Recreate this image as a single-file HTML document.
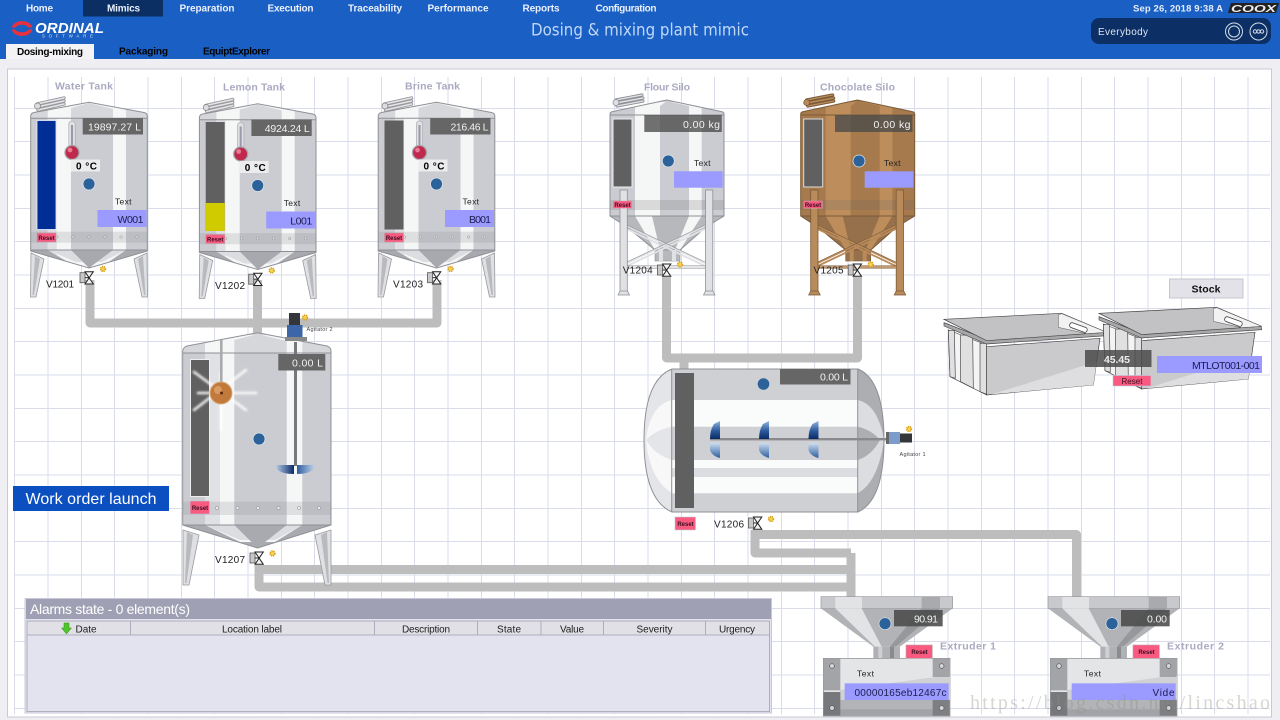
<!DOCTYPE html>
<html><head><meta charset="utf-8"><title>Dosing &amp; mixing plant mimic</title>
<style>
html,body{margin:0;padding:0;width:1280px;height:720px;overflow:hidden;background:#eeeef3}
svg{display:block;font-family:"Liberation Sans",sans-serif;filter:blur(.3px)}
.nav{font-size:10px;font-weight:bold;fill:#eaf0fb;text-anchor:middle}
.tab{font-size:10px;font-weight:bold;fill:#000}
.ttl{font-size:10.5px;font-weight:bold;fill:#a9a9c2}
.val{font-size:10.5px;fill:#f2f2f2;text-anchor:end}
.lbl{font-size:10px;fill:#222}
.sm{font-size:8.5px;fill:#222}
.rs{font-size:6px;font-weight:bold;fill:#3a1020;text-anchor:middle}
.th{font-size:10px;fill:#222;text-anchor:middle}
.pipe{fill:none;stroke:#bdbdbd;stroke-width:9;stroke-linejoin:round}
</style></head><body>
<svg width="1280" height="720" viewBox="0 0 1280 720" xmlns="http://www.w3.org/2000/svg">
<defs>
<filter id="soft" x="-30%" y="-30%" width="160%" height="160%"><feGaussianBlur stdDeviation="1"/></filter>
<linearGradient id="bTop" x1="0" y1="0" x2="0" y2="1"><stop offset="0" stop-color="#8fb2dc"/><stop offset=".55" stop-color="#2a5a9c"/><stop offset="1" stop-color="#0b2a66"/></linearGradient>
<linearGradient id="bBot" x1="0" y1="0" x2="0" y2="1"><stop offset="0" stop-color="#cfdff2"/><stop offset="1" stop-color="#2f5e9e"/></linearGradient>
<linearGradient id="bL" x1="0" y1="0" x2="1" y2="0"><stop offset="0" stop-color="#a9c4e4"/><stop offset="1" stop-color="#0b2a66"/></linearGradient>
<linearGradient id="bR" x1="0" y1="0" x2="1" y2="0"><stop offset="0" stop-color="#2f5e9e"/><stop offset="1" stop-color="#b9cfe8"/></linearGradient>
<clipPath id="tankClip"><path d="M30.7 116Q31 113 34 112.5L89 102.3L144 112.5Q147 113 147.3 116V251L89 268L30.7 251Z"/></clipPath>
<g id="gear"><circle r="2.4" fill="#f3d35a" stroke="#d99a10" stroke-width="1.6" stroke-dasharray="1.2 .8"/></g>
<g id="valve">
<rect x="0" y="1" width="5" height="10" fill="#c8c8c8" stroke="#555" stroke-width=".8"/>
<path d="M5 0H13.3L5 12.3H13.3Z" fill="#f4f4f4" stroke="#222" stroke-width="1"/>
<path d="M5 6H9" stroke="#222" stroke-width="1"/>
</g>
<g id="hatch" fill="none" stroke-linecap="round">
<path d="M37 104L64 98M37 107L64 101M38 110L64 104" stroke="#98989d" stroke-width="3.400"/>
<path d="M37 104L64 98M37 107L64 101M38 110L64 104" stroke="#e6e6e8" stroke-width="1.500"/>
<circle cx="37.500" cy="106" r="3" fill="#ddd" stroke="#888" stroke-width=".8"/>
</g>
<g id="tank">
<use href="#hatch"/>
<path d="M31 253L44 259L36 297H30.500Z" fill="#dfe0e3" stroke="#9a9a9e" stroke-width=".8"/>
<path d="M35 256L40 259L34 295H32.500Z" fill="#b9babd"/>
<path d="M147 253L134 259L142 297H147.500Z" fill="#dfe0e3" stroke="#9a9a9e" stroke-width=".8"/>
<path d="M143 256L138 259L144 295H145.500Z" fill="#b9babd"/>
<g clip-path="url(#tankClip)">
<rect x="28" y="100" width="122" height="170" fill="#cbccd1"/>
<rect x="28" y="100" width="122" height="18" fill="#d6d7da"/>
<rect x="28" y="250" width="122" height="20" fill="#a8a9ae"/>
<path d="M47.700 108L75 103H104L126 108V250L100 268H78L47.700 250Z" fill="#f5f6f6"/>
<path d="M47.700 118H56.700V255L47.700 250Z" fill="#e0e1e4"/>
<path d="M71 118V108L89 103L113 109V118Z" fill="#d6d7da"/>
<rect x="71" y="118" width="42" height="132" fill="#cbccd1"/>
<path d="M47.700 250H126L102 262L76 262Z" fill="#dcdde0"/>
<path d="M71 250H113L89 268Z" fill="#a8a9ae"/>
<rect x="30" y="231.700" width="118" height="11" fill="#8a8b90" opacity=".22"/>
</g>
<path d="M30.700 116Q31 113 34 112.500L89 102.300L144 112.500Q147 113 147.300 116V251L89 268L30.700 251Z" fill="none" stroke="#8f9095" stroke-width="1"/>
<path d="M31 118.300H147M31 250H147" stroke="#8f9095" stroke-width="1"/>
<g fill="#e9e9ec" stroke="#8a8a8e" stroke-width=".5"><circle cx="57" cy="237" r="1.200"/><circle cx="73" cy="237" r="1.200"/><circle cx="89" cy="237" r="1.200"/><circle cx="105" cy="237" r="1.200"/><circle cx="121" cy="237" r="1.200"/><circle cx="137" cy="237" r="1.200"/></g>
<rect x="82.700" y="118" width="60.300" height="16.500" fill="#666"/>
<rect x="68.800" y="121" width="6.400" height="26" rx="3" fill="#dfe0e3" stroke="#a4a4a8" stroke-width=".6"/>
<rect x="71" y="125" width="2" height="24" fill="#99a"/>
<circle cx="72" cy="152.500" r="7" fill="#c0284e" stroke="#a4a4a8" stroke-width="1.300"/>
<circle cx="70" cy="150" r="2.400" fill="#e87a92"/>
<rect x="71" y="159.500" width="29" height="12" fill="#ececee"/>
<circle cx="89" cy="184" r="6" fill="#2a6299" stroke="#e0e4ea" stroke-width=".8"/>
<use href="#valve" x="80" y="271.700"/>
<use href="#gear" x="103" y="269"/>
</g>
<clipPath id="siloClip"><path d="M610 114Q610 112 613 111.500L666.700 100L721 111.500Q724 112 724 114V216L706 227L680 250H655L627 227L610 216Z"/></clipPath>
<g id="silo">
<path d="M616 100L642 95M616 103L643 98M617 106L643 101" stroke="var(--s)" stroke-width="3.200" fill="none" stroke-linecap="round"/>
<path d="M616 100L642 95M616 103L643 98M617 106L643 101" stroke="var(--l)" stroke-width="1.400" fill="none" stroke-linecap="round"/>
<circle cx="616" cy="102.500" r="3" fill="var(--l)" stroke="var(--s)" stroke-width=".8"/>
<g clip-path="url(#siloClip)">
<rect x="608" y="98" width="118" height="155" fill="var(--b)"/>
<rect x="608" y="216" width="118" height="36" fill="var(--d)"/>
<path d="M635 107L660 102H675L701.700 107V216L680 250H655L635 216Z" fill="var(--w)"/>
<path d="M660 115V106L667 101L689 106V115Z" fill="var(--b)"/>
<rect x="660" y="115" width="29" height="101" fill="var(--b)"/>
<path d="M652 216H689L675 250H660Z" fill="var(--d)"/>
<rect x="608" y="200" width="118" height="10" fill="#6a6a6a" opacity=".2"/>
</g>
<path d="M610 114Q610 112 613 111.500L666.700 100L721 111.500Q724 112 724 114V216L706 227L680 250H655L627 227L610 216Z" fill="none" stroke="var(--s)" stroke-width="1"/>
<path d="M610 115H724M610 216H724" stroke="var(--s)" stroke-width=".9"/>
<rect x="655" y="250" width="25" height="11" fill="var(--d)" stroke="var(--s)" stroke-width=".6"/>
<rect x="659" y="250" width="4" height="11" fill="var(--l)"/><rect x="672" y="250" width="4" height="11" fill="var(--l)"/>
<path d="M627 226L705 263M627 229L705 266M705 226L627 263M705 229L627 266M627 267H705" stroke="var(--l)" stroke-width="1.800" fill="none"/>
<path d="M627 225L705 262M705 225L627 262M627 265.500H705M627 268.500H705" stroke="var(--s)" stroke-width=".6" fill="none"/>
<rect x="620" y="190" width="7.300" height="103" fill="var(--l)" stroke="var(--s)" stroke-width=".8"/>
<rect x="705.500" y="190" width="7.300" height="103" fill="var(--l)" stroke="var(--s)" stroke-width=".8"/>
<path d="M618 295L620 291H627.500L629.500 295ZM703.500 295L705.500 291H713L715 295Z" fill="var(--l)" stroke="var(--s)" stroke-width=".8"/>
<rect x="613" y="119" width="19" height="68" fill="#606060" stroke="var(--f)" stroke-width="1"/>
<rect x="644.300" y="115" width="77.500" height="17" fill="#4a4a4a" opacity=".78"/>
<circle cx="668.300" cy="161" r="6" fill="#2a6299" stroke="#e0e4ea" stroke-width=".8"/>
<rect x="674" y="171.300" width="48.700" height="16.400" fill="#9a9aff"/>
<rect x="613.300" y="201" width="18.400" height="7.300" fill="#f85a80" stroke="#d9a0b0" stroke-width=".5"/>
<use href="#valve" x="657.500" y="264"/>
<use href="#gear" x="680" y="264.500"/>
</g>
<g id="ext">
<rect x="33" y="20" width="395" height="35" fill="#c8c9cc" stroke="#98999d" stroke-width="2"/>
<rect x="76" y="21" width="80" height="34" fill="#e2e3e5"/>
<rect x="335" y="21" width="55" height="34" fill="#a9aaae"/>
<path d="M33 55H428L270 170H190Z" fill="#b2b3b7"/>
<path d="M76 55H155L215 170H195Z" fill="#e2e3e5"/>
<path d="M335 55H390L258 170H240Z" fill="#97989c"/>
<rect x="190" y="170" width="80" height="35" fill="#b0b1b5"/>
<rect x="205" y="170" width="12" height="35" fill="#cfd0d3"/><rect x="240" y="170" width="12" height="35" fill="#8a8b8f"/>
<rect x="40" y="205" width="380" height="173" fill="#e4e5e6" stroke="#88898d" stroke-width="2"/>
<path d="M90 300L420 255V330H90Z" fill="#d0d1d3"/>
<rect x="41" y="206" width="50" height="95" fill="#a3a4a8"/>
<rect x="368" y="206" width="51" height="55" fill="#a3a4a8"/>
<rect x="41" y="330" width="378" height="47" fill="#b3b4b8"/>
<rect x="41" y="358" width="378" height="19" fill="#a2a3a7"/>
<rect x="41" y="306" width="50" height="71" fill="#77787c"/>
<rect x="368" y="330" width="51" height="47" fill="#7e7f83"/>
<g fill="#d4d5d8" stroke="#555" stroke-width="2"><circle cx="66" cy="228" r="7"/><circle cx="395" cy="228" r="7"/><circle cx="66" cy="354" r="7"/><circle cx="395" cy="354" r="7"/></g>
<rect x="104" y="280" width="312" height="50" fill="#9a9aff"/>
<rect x="252" y="60" width="146" height="49" fill="#4a4a4a" opacity=".88"/>
<circle cx="225" cy="101" r="18" fill="#2a6299" stroke="#dfe4ea" stroke-width="2"/>
<rect x="288" y="165" width="79" height="40" fill="#f85a80" stroke="#c9a2ad" stroke-width="2"/>
</g>
<g id="crate">
<path d="M55 180L170 225V375L60 320Z" fill="#f4f4f4" stroke="#444" stroke-width="2"/>
<path d="M55 182H73L76 325L60 320ZM92 195H128L130 355L92 335ZM150 220H170V373L150 365Z" fill="#e0e0e0" stroke="#444" stroke-width="2"/>
<path d="M170 230L510 205L490 345L170 375Z" fill="#cacacc" stroke="#444" stroke-width="2"/>
<path d="M185 373L500 275L490 345Z" fill="#dedee0"/>
<path d="M42 168L170 222L530 197L528 187L170 208L42 158Z" fill="#a8a8aa" stroke="#444" stroke-width="2"/>
<path d="M42 148L395 130L530 187L170 212Z" fill="#c2c2c4" stroke="#444" stroke-width="2"/>
<path d="M385 134L395 131L530 187L470 191L385 172Z" fill="#f2f2f2" stroke="#555" stroke-width="1.500"/>
<rect x="418" y="165" width="55" height="15" rx="7" transform="rotate(20 445 172)" fill="#fff" stroke="#444" stroke-width="2.500"/>
</g>
</defs>

<rect width="1280" height="720" fill="#eeeef3"/>
<rect x="0" y="0" width="1280" height="59" fill="#1a5fc4"/>
<rect x="83" y="0" width="80" height="16.500" fill="#0b2f63"/>
<text class="nav" x="39.500" y="11.500" textLength="27">Home</text>
<text class="nav" x="123.500" y="11.500" textLength="33">Mimics</text>
<text class="nav" x="207" y="11.500" textLength="55">Preparation</text>
<text class="nav" x="290.500" y="11.500" textLength="46">Execution</text>
<text class="nav" x="375" y="11.500" textLength="54">Traceability</text>
<text class="nav" x="458" y="11.500" textLength="61">Performance</text>
<text class="nav" x="541" y="11.500" textLength="37">Reports</text>
<text class="nav" x="626" y="11.500" textLength="61">Configuration</text>

<!-- logo -->
<ellipse cx="22" cy="28.500" rx="8.500" ry="5.600" fill="none" stroke="#e8313f" stroke-width="3.600"/>
<path d="M10 28.500H34" stroke="#1a5fc4" stroke-width="2"/>
<text x="35" y="33" font-size="15" font-weight="bold" font-style="italic" fill="#fff" textLength="69" lengthAdjust="spacingAndGlyphs">ORDINAL</text>
<text x="42" y="37.500" font-size="4.500" fill="#cfe0f8" textLength="53" letter-spacing="2">SOFTWARE</text>

<text x="640" y="35.500" font-size="17" fill="#c0d8f8" text-anchor="middle" textLength="218" font-family="DejaVu Sans" lengthAdjust="spacingAndGlyphs">Dosing &amp; mixing plant mimic</text>

<text x="1133" y="11.500" font-size="9.500" font-weight="bold" fill="#e6edf8" textLength="90">Sep 26, 2018 9:38 A</text>
<path d="M1231 3H1279L1276 13H1228Z" fill="#222"/>
<text x="1231" y="12" font-size="10.500" font-weight="bold" font-style="italic" fill="#eee" textLength="45" lengthAdjust="spacingAndGlyphs">COOX</text>
<rect x="1091" y="18" width="180" height="26" rx="8" fill="#0c2f66"/>
<text x="1098" y="35" font-size="10" fill="#dde5f0" textLength="50">Everybody</text>
<g fill="none" stroke="#d3dbe6" stroke-width="1"><circle cx="1234" cy="31.500" r="8.500"/><circle cx="1234" cy="31.500" r="5.500"/><circle cx="1258.500" cy="31.500" r="8.500"/><circle cx="1255" cy="31.500" r="1.700"/><circle cx="1258.500" cy="31.500" r="1.700"/><circle cx="1262" cy="31.500" r="1.700"/></g>

<path d="M6 59V44H94V59Z" fill="#f3f3f6"/>
<text class="tab" x="17" y="55" textLength="66">Dosing-mixing</text>
<text class="tab" x="119" y="54.500" textLength="49">Packaging</text>
<text class="tab" x="203" y="54.500" textLength="67">EquiptExplorer</text>

<!-- panel -->
<rect x="7.500" y="69" width="1264" height="648" fill="#fff" stroke="#c9c9d6" stroke-width="1"/>
<path fill="none" stroke="#dadcec" stroke-width="1" d="M14.500 77V714M48 77V714M81.500 77V714M114.500 77V714M148 77V714M181.500 77V714M214.500 77V714M248 77V714M281.500 77V714M314.500 77V714M348 77V714M381.500 77V714M414.500 77V714M448 77V714M481.500 77V714M514.500 77V714M548 77V714M581.500 77V714M614.500 77V714M648 77V714M681.500 77V714M714.500 77V714M748 77V714M781.500 77V714M814.500 77V714M848 77V714M881.500 77V714M914.500 77V714M948 77V714M981.500 77V714M1014.500 77V714M1048 77V714M1081.500 77V714M1114.500 77V714M1148 77V714M1181.500 77V714M1214.500 77V714M1248 77V714M14 108.500H1270M14 141.500H1270M14 175H1270M14 208.500H1270M14 241.500H1270M14 275H1270M14 308.500H1270M14 341.500H1270M14 375H1270M14 408.500H1270M14 441.500H1270M14 475H1270M14 508.500H1270M14 541.500H1270M14 575H1270M14 608.500H1270M14 641.500H1270M14 675H1270M14 708.500H1270"/>

<!-- pipes -->
<path class="pipe" d="M90 280V323H437V280M257.500 280V336"/>
<path class="pipe" d="M666.500 277V358H857.500V277M684 358V372"/>
<path class="pipe" d="M259 565V587H851M259 569.500H851M851 553V600M755 530V553H851M755 534.500H1076.500V600"/>

<!-- titles -->
<text class="ttl" x="55" y="89.500" textLength="58">Water Tank</text>
<text class="ttl" x="223" y="90.500" textLength="62">Lemon Tank</text>
<text class="ttl" x="405" y="89.500" textLength="55">Brine Tank</text>
<text class="ttl" x="644" y="90.500" textLength="46">Flour Silo</text>
<text class="ttl" x="820" y="90.500" textLength="75">Chocolate Silo</text>

<!-- tanks -->
<use href="#tank"/>
<use href="#tank" transform="translate(168.700,1.500)"/>
<use href="#tank" transform="translate(347.500,0)"/>

<rect x="37" y="120.500" width="19" height="109" fill="#002d96" stroke="#eef" stroke-width=".8"/>
<rect x="205.700" y="122" width="19" height="109" fill="#606060"/>
<rect x="205.700" y="203" width="19" height="28" fill="#cfcb00"/>
<rect x="384.500" y="120.500" width="19" height="109" fill="#606060"/>

<text class="val" x="141" y="130.500" textLength="53">19897.27 L</text>
<text class="val" x="309.700" y="132" textLength="45">4924.24 L</text>
<text class="val" x="488.500" y="130.500" textLength="38">216.46 L</text>
<text x="76" y="169.500" font-size="10" font-weight="bold" fill="#000" textLength="21">0 °C</text>
<text x="244.700" y="171" font-size="10" font-weight="bold" fill="#000" textLength="21">0 °C</text>
<text x="423.500" y="169.500" font-size="10" font-weight="bold" fill="#000" textLength="21">0 °C</text>
<text class="sm" x="115" y="204.500" textLength="16.500">Text</text>
<text class="sm" x="283.700" y="206" textLength="16.500">Text</text>
<text class="sm" x="462.500" y="204.500" textLength="16.500">Text</text>
<g fill="#9a9aff"><rect x="97.500" y="210" width="49" height="17"/><rect x="266.200" y="211.500" width="49" height="17"/><rect x="445" y="210" width="49" height="17"/></g>
<text x="143.500" y="223" font-size="10.500" fill="#1c1c50" text-anchor="end" textLength="26">W001</text>
<text x="312.200" y="224.500" font-size="10.500" fill="#1c1c50" text-anchor="end" textLength="22">L001</text>
<text x="491" y="223" font-size="10.500" fill="#1c1c50" text-anchor="end" textLength="22">B001</text>
<g fill="#f85a80" stroke="#b9a0a8" stroke-width=".5"><rect x="37" y="233" width="19" height="9"/><rect x="205.700" y="234.500" width="19" height="9"/><rect x="384.500" y="233" width="19" height="9"/></g>
<text class="rs" x="46.500" y="240">Reset</text><text class="rs" x="215.200" y="241.500">Reset</text><text class="rs" x="394" y="240">Reset</text>
<text class="lbl" x="46" y="287.500" textLength="28">V1201</text>
<text class="lbl" x="215" y="289" textLength="30">V1202</text>
<text class="lbl" x="393" y="287.500" textLength="30">V1203</text>

<!-- mixer tank -->
<path d="M183 530L199 535L189 585H183Z" fill="#dfe0e3" stroke="#9a9a9e" stroke-width=".8"/>
<path d="M187 532L193 535L186.500 583H185Z" fill="#b9babd"/>
<path d="M331 530L315 535L325 585H331Z" fill="#dfe0e3" stroke="#9a9a9e" stroke-width=".8"/>
<path d="M327 532L321 535L327.500 583H329Z" fill="#b9babd"/>
<clipPath id="mixClip"><path d="M182.700 351Q183 347.500 187 346L257.500 332.700L327 346Q331 347.500 331 351V525L257.500 548L182.700 525Z"/></clipPath>
<g clip-path="url(#mixClip)">
<rect x="180" y="330" width="155" height="220" fill="#cbccd1"/>
<rect x="180" y="330" width="155" height="23" fill="#d6d7da"/>
<rect x="180" y="525" width="155" height="25" fill="#a9aab0"/>
<path d="M205 342L240 335H270L302.300 342V525L275 542H240L205 525Z" fill="#f5f6f6"/>
<path d="M205 353H220V530L205 525Z" fill="#e0e1e4"/>
<path d="M234.300 353V340L257.500 334L286.700 341V353Z" fill="#d6d7da"/>
<rect x="234.300" y="353" width="52.400" height="172" fill="#cbccd1"/>
<path d="M205 525H302.300L275 540H240Z" fill="#dcdde0"/>
<path d="M234.300 525H286.700L257.500 548Z" fill="#a9aab0"/>
<rect x="180" y="501.700" width="155" height="13.300" fill="#8a8b90" opacity=".22"/>
</g>
<path d="M182.700 351Q183 347.500 187 346L257.500 332.700L327 346Q331 347.500 331 351V525L257.500 548L182.700 525Z" fill="none" stroke="#8f9095" stroke-width="1"/>
<path d="M183 353H331M183 525H331" stroke="#8f9095" stroke-width="1"/>
<g fill="#ecedef" stroke="#85868a" stroke-width=".5"><circle cx="217" cy="508" r="1.600"/><circle cx="237.500" cy="508" r="1.600"/><circle cx="258" cy="508" r="1.600"/><circle cx="278.500" cy="508" r="1.600"/><circle cx="299" cy="508" r="1.600"/><circle cx="319" cy="508" r="1.600"/></g>
<rect x="190.500" y="359.500" width="19" height="137" fill="#606060" stroke="#eee" stroke-width="1"/>
<!-- agitator 2 shaft behind the value box -->
<rect x="294" y="342" width="3" height="124" fill="#77787c"/>
<rect x="278.300" y="354" width="47" height="16.500" fill="#666"/>
<text class="val" x="323" y="366.500" textLength="31">0.00 L</text>
<circle cx="259" cy="439" r="6" fill="#2a6299" stroke="#e0e4ea" stroke-width=".8"/>
<rect x="190" y="501" width="19.500" height="13" fill="#f85a80" stroke="#bcd" stroke-width=".6"/>
<text class="rs" x="200" y="510">Reset</text>
<!-- ball + rays -->
<g stroke="#fff" stroke-width="2.600" opacity=".9" stroke-linecap="round" filter="url(#soft)"><path d="M198 393H256M221 372V430M194 372L246 410M246 370L194 410"/></g>
<rect x="220" y="340" width="2.600" height="45" fill="#a9aaae"/>
<circle cx="221" cy="393" r="11" fill="#c27a3c" stroke="#d9a878" stroke-width="1"/>
<circle cx="218" cy="390" r="4" fill="#e3a970" opacity=".7"/>
<circle cx="221.500" cy="393" r="1.500" fill="#5a2a10"/>
<!-- agitator 2 -->
<path d="M276.700 465H294V474Q281 474 276.700 469Z" fill="url(#bL)"/>
<path d="M314 465H297V474Q309 474 314 469Z" fill="url(#bR)"/>
<rect x="289" y="313" width="11" height="12" fill="#33363a"/>
<rect x="287" y="325" width="15.500" height="12" fill="#3d66a8"/>
<path d="M285 337H307V341H285Z" fill="#888"/>
<use href="#gear" x="305" y="317.500"/>
<text x="306.500" y="331" font-size="5.500" fill="#444" textLength="26">Agitator 2</text>
<use href="#valve" x="250" y="552"/>
<use href="#gear" x="272.500" y="553.500"/>
<text class="lbl" x="215" y="563" textLength="30">V1207</text>

<!-- silos -->
<g style="--b:#cbccd1;--w:#f5f6f6;--l:#e0e1e4;--d:#b7b8bc;--s:#8f9095;--f:#eee"><use href="#silo"/></g>
<g transform="translate(190.700,0)" style="--b:#a67a4c;--w:#bd8e5c;--l:#b98a5a;--d:#96704a;--s:#7a5a38;--f:#ddd"><use href="#silo"/></g>
<text class="val" x="720" y="128" textLength="37">0.00 kg</text>
<text class="val" x="910.500" y="128" textLength="37">0.00 kg</text>
<text class="sm" x="694" y="166" textLength="16.500">Text</text>
<text class="sm" x="884" y="166" textLength="16.500">Text</text>
<text class="rs" x="622.500" y="207">Reset</text>
<text class="rs" x="813" y="207">Reset</text>
<text class="lbl" x="622.700" y="273.500" textLength="30">V1204</text>
<text class="lbl" x="813.500" y="273.500" textLength="30">V1205</text>

<!-- horizontal tank -->
<clipPath id="hClip"><path d="M672 369H858Q884 380 884 440Q884 500 858 512H672Q644 500 644 440Q644 380 672 369Z"/></clipPath>
<g clip-path="url(#hClip)">
<rect x="640" y="365" width="250" height="150" fill="#cfd0d4"/>
<rect x="640" y="400" width="250" height="68" fill="#fafbfb"/>
<rect x="640" y="426.700" width="250" height="33.300" fill="#cfd0d4"/>
<rect x="640" y="468" width="250" height="9" fill="#dcdde0"/>
<rect x="640" y="477" width="250" height="16.300" fill="#fafbfb"/>
<rect x="640" y="365" width="32" height="150" fill="#e4e5e8"/>
<path d="M646 440Q650 405 672 400V426.700Q655 430 646 440Q655 455 672 460V493Q650 480 646 440Z" fill="#f8f8f8"/>
<rect x="857.700" y="365" width="30" height="150" fill="#adaeb2"/>
<path d="M858 400Q878 405 884 440Q878 482 858 493V460Q872 455 880 440Q872 430 858 426.700Z" fill="#dcdde0"/>
</g>
<path d="M672 369H858Q884 380 884 440Q884 500 858 512H672Q644 500 644 440Q644 380 672 369Z" fill="none" stroke="#8f9095" stroke-width="1"/>
<path d="M671.700 369V512M857.700 369V512" stroke="#8f9095" stroke-width="1"/>
<rect x="675" y="373" width="19" height="135" fill="#606060"/>
<rect x="780" y="369" width="70.500" height="15.500" fill="#666"/>
<text class="val" x="848" y="380.500" textLength="28">0.00 L</text>
<circle cx="763.500" cy="384" r="5.800" fill="#2a6299"/>
<rect x="710" y="438" width="176" height="2.400" fill="#8a8a8e"/>
<g>
<path d="M720 421V439H710Q710 430 714 424Z" fill="url(#bTop)"/><path d="M710 442.700H720V458Q712 456 710 450Z" fill="url(#bBot)"/>
<path d="M769 421V439H759Q759 430 763 424Z" fill="url(#bTop)"/><path d="M759 442.700H769V458Q761 456 759 450Z" fill="url(#bBot)"/>
<path d="M818.500 421V439H808.500Q808.500 430 812.500 424Z" fill="url(#bTop)"/><path d="M808.500 442.700H818.500V458Q810.500 456 808.500 450Z" fill="url(#bBot)"/>
</g>
<rect x="886" y="432" width="3" height="12" fill="#666"/>
<rect x="889" y="432" width="11" height="12" fill="#7c9ccb"/>
<rect x="900" y="433.500" width="12" height="9" fill="#33363a"/>
<use href="#gear" x="909" y="429"/>
<text x="899.500" y="456" font-size="5.500" fill="#444" textLength="26">Agitator 1</text>
<rect x="675" y="517" width="20.500" height="13" fill="#f85a80" stroke="#bcd" stroke-width=".6"/>
<text class="rs" x="685.500" y="526">Reset</text>
<use href="#valve" x="748.500" y="517"/>
<use href="#gear" x="771" y="519"/>
<text class="lbl" x="714" y="527.500" textLength="30">V1206</text>

<!-- crates -->
<g transform="translate(930,270) scale(.33333)">
<use href="#crate"/>
<use href="#crate" transform="translate(465,-18)"/>
</g>
<rect x="1169.500" y="279" width="73.500" height="19" fill="#e2e2e8" stroke="#c6c6cf" stroke-width="1"/>
<text x="1206" y="292.500" font-size="10.500" font-weight="bold" fill="#111" text-anchor="middle" textLength="29">Stock</text>
<rect x="1085" y="350" width="66.500" height="17" fill="#4a4a4a" opacity=".85"/>
<text x="1117" y="363" font-size="10.500" font-weight="bold" fill="#eee" text-anchor="middle" textLength="26">45.45</text>
<rect x="1157" y="356" width="105" height="17" fill="#9a9aff"/>
<text x="1260" y="369" font-size="10.500" fill="#1c1c50" text-anchor="end" textLength="68">MTLOT001-001</text>
<rect x="1113" y="375.500" width="38" height="10.500" fill="#f85a80" stroke="#bcd" stroke-width=".6"/>
<text x="1132" y="384" font-size="8" fill="#3a1020" text-anchor="middle" textLength="21">Reset</text>

<!-- extruders -->
<g transform="translate(810,590) scale(.33333)"><use href="#ext"/></g>
<g transform="translate(1037,590) scale(.33333)"><use href="#ext"/></g>
<text class="val" x="938" y="622.500" textLength="24">90.91</text>
<text class="val" x="1167" y="622.500" textLength="20">0.00</text>
<text class="rs" x="919.500" y="654">Reset</text>
<text class="rs" x="1146.500" y="654">Reset</text>
<text class="ttl" x="940" y="649.500" textLength="56">Extruder 1</text>
<text class="ttl" x="1167" y="649.500" textLength="57">Extruder 2</text>
<text class="sm" x="857" y="676.500" textLength="17">Text</text>
<text class="sm" x="1084" y="676.500" textLength="17">Text</text>
<text x="946.500" y="696" font-size="10" fill="#1c1c50" text-anchor="end" textLength="92">00000165eb12467c</text>
<text x="1174.500" y="696" font-size="10" fill="#1c1c50" text-anchor="end" textLength="22">Vide</text>

<!-- work order -->
<rect x="13" y="486" width="156" height="25" fill="#0b4fc0"/>
<text x="91" y="504" font-size="16" fill="#fff" text-anchor="middle" textLength="131">Work order launch</text>

<!-- alarms -->
<rect x="25" y="598.500" width="746.500" height="114.500" fill="#e3e3ef" stroke="#c8c8d8" stroke-width="1"/>
<rect x="26" y="599" width="745" height="20" fill="#a0a0b4"/>
<text x="30" y="614" font-size="14" fill="#fff" textLength="160">Alarms state - 0 element(s)</text>
<rect x="27" y="621" width="742.500" height="14" fill="#e0e0e6" stroke="#aeaebe" stroke-width="1"/>
<rect x="27" y="621" width="742.500" height="90.500" fill="none" stroke="#aeaebe" stroke-width="1"/>
<path d="M130.500 621V635M374.500 621V635M477.500 621V635M541 621V635M603.500 621V635M705.500 621V635" stroke="#aeaebe" stroke-width="1"/>
<path d="M64 623H69V628H71.500L66.500 634L61.500 628H64Z" fill="#4fc52a" stroke="#2f8f18" stroke-width=".5"/>
<text class="th" x="86" y="632.500" textLength="21">Date</text>
<text class="th" x="252" y="632.500" textLength="60">Location label</text>
<text class="th" x="426" y="632.500" textLength="48">Description</text>
<text class="th" x="509" y="632.500" textLength="24">State</text>
<text class="th" x="572" y="632.500" textLength="24">Value</text>
<text class="th" x="654.500" y="632.500" textLength="36">Severity</text>
<text class="th" x="737" y="632.500" textLength="36">Urgency</text>

<!-- watermark -->
<text x="970" y="709" font-size="20" font-family="Liberation Serif" fill="#8f8f80" opacity=".36" textLength="300">https://blog.csdn.net/lincshao</text>
</svg>
</body></html>
